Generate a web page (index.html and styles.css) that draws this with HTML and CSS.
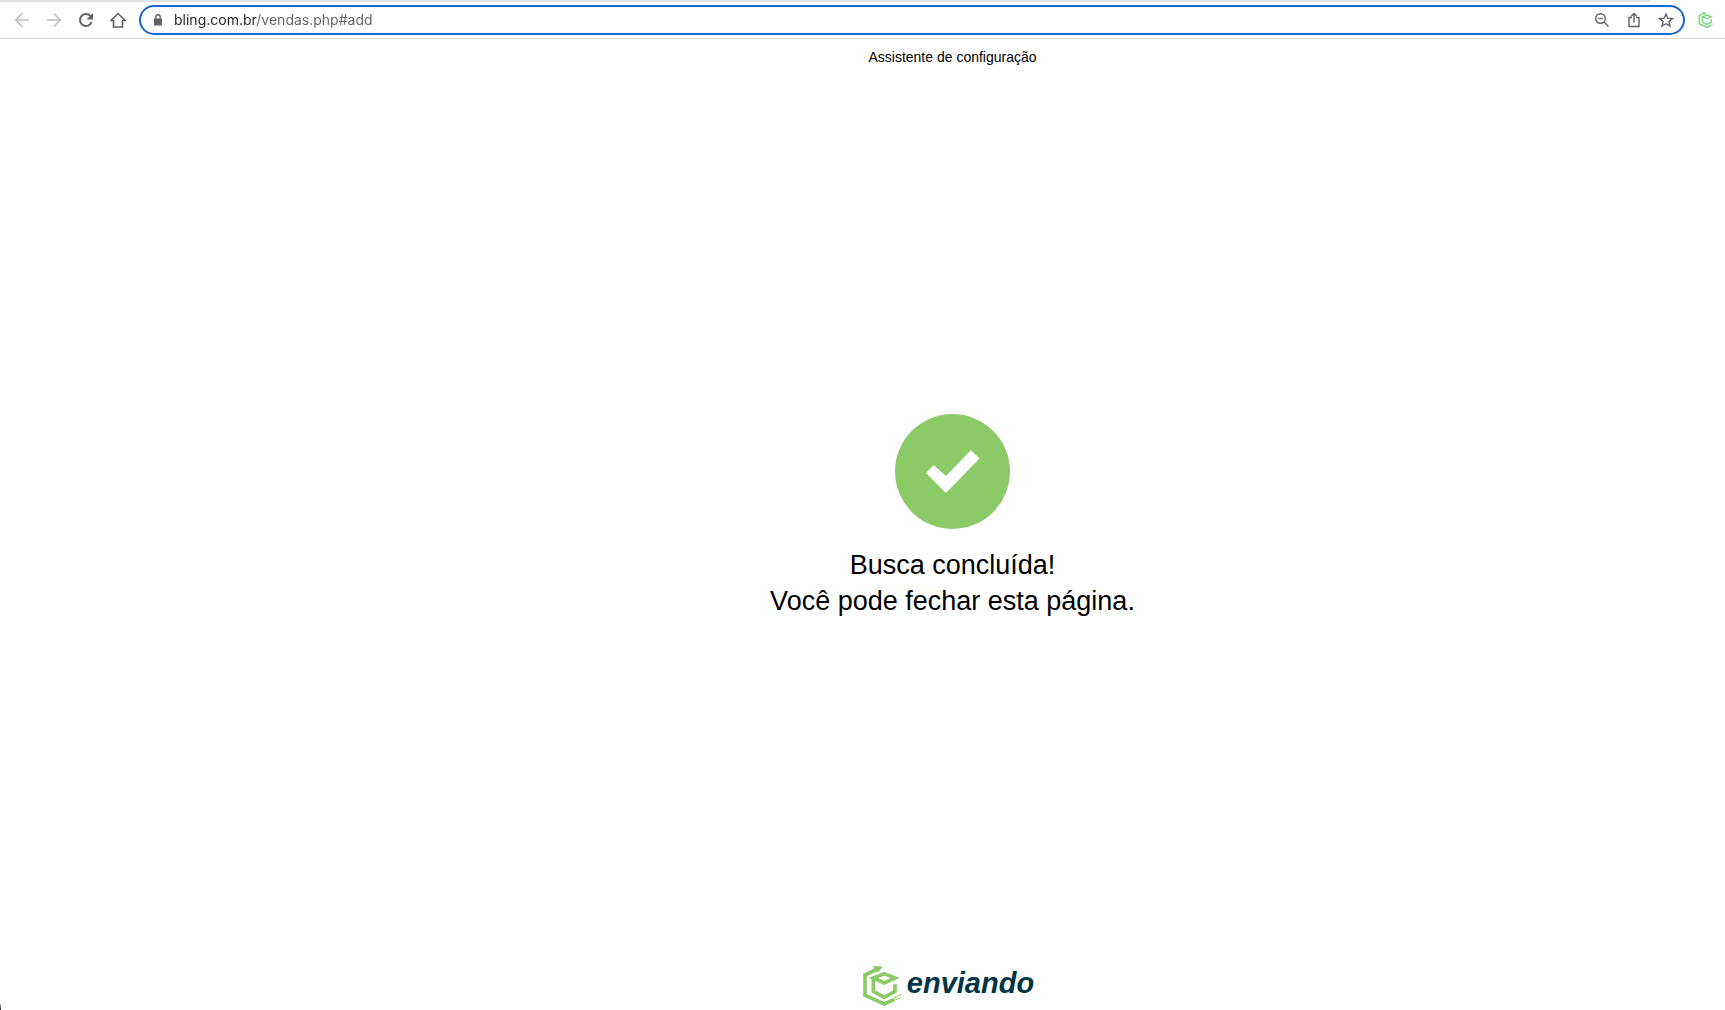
FILE: index.html
```html
<!DOCTYPE html>
<html lang="pt-BR">
  <head>
    <meta charset="utf-8">
    <title>Assistente de configuração</title>
    <link rel="stylesheet" href="styles.css">
  </head>
  <body>
    <header class="browser">
      <div class="tabstrip"></div>
      <nav class="toolbar">
        <button class="tool off" aria-label="Voltar">
          <svg width="16" height="16" viewBox="0 0 16 16"><path d="M15 8H2M8 1.5 1.8 8 8 14.5"/></svg>
        </button>
        <button class="tool off" aria-label="Avançar">
          <svg width="16" height="16" viewBox="0 0 16 16"><path d="M1 8h13M8 1.5 14.2 8 8 14.5"/></svg>
        </button>
        <button class="tool" aria-label="Recarregar">
          <svg width="16" height="16" viewBox="0 0 16 16"><path class="bold" d="M13.6 10A6 6 0 1 1 12.3 3.8L13.5 5"/><path class="fill" d="M15 1v6.500H8.500z"/></svg>
        </button>
        <button class="tool" aria-label="Página inicial">
          <svg width="16" height="16" viewBox="0 0 16 16"><path class="roof" d="M.8 8.500h2.700V15h9V8.500h2.700L8 1.500z"/></svg>
        </button>
        <div class="address">
          <svg class="lock" width="8" height="12" viewBox="0 0 8 12"><path class="fill" d="M0 4.500h8v7H0z"/><path d="M1.800 5V3a2.200 2.200 0 0 1 4.400 0v2"/></svg>
          <input class="url" type="text" aria-label="Endereço" value="bling.com.br/vendas.php#add">
          <button class="tool" aria-label="Zoom">
            <svg width="16" height="16" viewBox="0 0 16 16"><circle cx="6.500" cy="6.500" r="4.800"/><path d="M10 10l4.500 4.500M4.300 6.500h4.400"/></svg>
          </button>
          <button class="tool" aria-label="Compartilhar">
            <svg width="16" height="16" viewBox="0 0 16 16"><path d="M6 5.500H3v9h10v-9h-3M8 10.500V1.800M5.200 4.300 8 1.500l2.800 2.800"/></svg>
          </button>
          <button class="tool" aria-label="Favoritar">
            <svg width="16" height="16" viewBox="0 0 16 16"><path d="M8 2l1.800 4.200 4.600.4-3.500 3 1.100 4.500L8 11.700l-4 2.400 1.100-4.500-3.500-3 4.600-.4z"/></svg>
          </button>
        </div>
        <button class="tool extension" aria-label="Enviando">
          <svg width="16" height="16" viewBox="0 0 114 120"><use href="#cube"/></svg>
        </button>
      </nav>
    </header>

    <main class="content">
      <h1 class="title">Assistente de configuração</h1>
      <section class="result">
        <svg class="check" width="115" height="115" viewBox="0 0 115 115">
          <circle cx="57.500" cy="57.500" r="57.500"/>
          <path d="M38.500 51 51 62 76 36l8.500 8.500L51 79 31 59z"/>
        </svg>
        <p class="message">Busca concluída!<br>Você pode fechar esta página.</p>
      </section>
      <footer class="brand">
        <svg class="logo" width="38" height="40" viewBox="0 0 114 120">
          <g id="cube">
            <path class="line" d="M44 9 6 27v61l58 26 30-14"/>
            <path class="tip" d="M31 1l27 2-14 16z"/>
            <path class="line" d="M31 36v40l33 18 32-18V55M31 36l33-13 32 13-32 15z"/>
            <path class="speed" d="M94 95l20-9M97 102l16-7"/>
          </g>
        </svg>
        <span class="name">enviando</span>
      </footer>
    </main>
    <div class="corner"></div>
  </body>
</html>
```
FILE: styles.css
```css
* {
  box-sizing: border-box;
}

body {
  display: flex;
  flex-direction: column;
  min-height: 100vh;
  margin: 0;
  background: white;
  color: black;
  font-family: "Liberation Sans", Arial, sans-serif;
}

.tabstrip {
  height: 2px;
  margin-right: 74px;
  background: #dee1e6;
  border-bottom-right-radius: 2px;
}

.toolbar {
  display: flex;
  align-items: center;
  height: 37px;
  padding: 0 3px 0 6px;
  border-bottom: 1px solid #dadada;
}

.tool {
  display: flex;
  align-items: center;
  justify-content: center;
  width: 32px;
  height: 26px;
  padding: 0;
  border: 0;
  background: none;
}

.tool svg,
.lock {
  fill: none;
  stroke: #5f6368;
  stroke-width: 1.4;
}

.tool.off svg {
  stroke: #babcbe;
  stroke-width: 1.6;
}

.tool .bold {
  stroke-width: 2;
}

.tool .roof {
  stroke-width: 1.6;
}

.tool .fill,
.lock .fill {
  fill: #5f6368;
  stroke: none;
}

.address {
  display: flex;
  flex: 1;
  align-items: center;
  height: 30px;
  margin: 0 5px;
  padding: 0 1px 0 13px;
  border: 2px solid #1967d2;
  border-radius: 15px;
}

.url {
  flex: 1;
  min-width: 0;
  margin-left: 12px;
  padding: 0;
  border: 0;
  outline: 0;
  background: linear-gradient(to right, #202124 82px, #5f6368 82px);
  -webkit-background-clip: text;
  background-clip: text;
  color: transparent;
  font: 14px/20px Inter, Roboto, sans-serif;
}

.tool.extension svg {
  stroke: #6fd67a;
  stroke-width: 10;
}

.extension .tip {
  fill: #6fd67a;
}

.content {
  display: flex;
  flex: 1;
  flex-direction: column;
  align-items: center;
  padding: 8px 0 4px 180px;
}

.title {
  margin: 0;
  font-size: 14px;
  font-weight: normal;
  line-height: 20px;
}

.result {
  display: flex;
  flex: 1;
  flex-direction: column;
  align-items: center;
  justify-content: center;
}

.check circle {
  fill: #8cc967;
}

.check path {
  fill: white;
}

.message {
  margin: 18px 0 0;
  font-size: 27px;
  line-height: 36px;
  text-align: center;
}

.brand {
  display: flex;
  align-items: center;
  gap: 6px;
  margin-right: 8px;
}

.logo {
  fill: none;
  stroke: #8cc967;
  stroke-width: 11;
}

.logo .tip {
  fill: #8cc967;
  stroke-width: 2;
}

.logo .speed {
  stroke-width: 4;
  stroke-dasharray: 6 2;
}

.name {
  padding-bottom: 6px;
  color: #003546;
  font-size: 29px;
  font-style: italic;
  font-weight: bold;
  line-height: 34px;
}

/* dark edge behind the rounded window corner */
.corner {
  position: absolute;
  bottom: 0;
  left: 0;
  width: 1px;
  height: 6px;
  background: linear-gradient(#bbb, #222);
}
```
